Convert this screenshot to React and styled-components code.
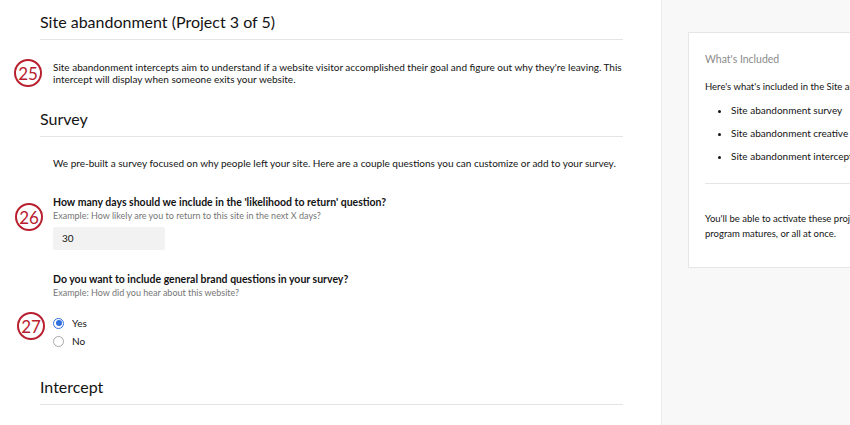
import React from 'react';
import styled, { createGlobalStyle } from 'styled-components';

const GlobalStyle = createGlobalStyle`
  html, body {
    margin: 0;
    padding: 0;
    background: #ffffff;
    font-family: Lato, "Open Sans", "Liberation Sans", sans-serif;
    color: #1a1a1a;
  }
`;

const Page = styled.div`
  display: flex;
  width: 850px;
  height: 425px;
  overflow: hidden;
`;

const Main = styled.main`
  position: relative;
  width: 661px;
  flex-shrink: 0;
  padding: 0 38px 0 40px;
  box-sizing: border-box;
`;

const Aside = styled.aside`
  flex: 1;
  background: #f8f8f8;
  border-left: 1px solid #ebebeb;
  padding: 32px 0 0 26px;
  overflow: hidden;
`;

const SectionTitle = styled.h2`
  margin: 0;
  font-size: 16px;
  font-weight: 400;
  line-height: 22px;
  color: #141414;
  padding: ${(p) => p.$top || 11}px 0 6px;
  border-bottom: 1px solid #e4e4e4;
`;

const Body = styled.div`
  padding: ${(p) => p.$top || 0}px 0 0 13px;
`;

const Paragraph = styled.p`
  margin: 0;
  font-size: 10px;
  line-height: 11.5px;
  color: #141414;
`;

const Question = styled.div`
  margin-top: ${(p) => p.$top}px;
`;

const Prompt = styled.div`
  font-size: 10.5px;
  font-weight: 700;
  line-height: 13px;
  color: #141414;
`;

const Hint = styled.div`
  font-size: 9px;
  line-height: 13px;
  color: #767676;
`;

const NumberInput = styled.div`
  margin-top: 5px;
  width: 112px;
  height: 23px;
  background: #f2f2f2;
  border-radius: 2px;
  box-sizing: border-box;
  padding-left: 9px;
  display: flex;
  align-items: center;
  font-size: 10px;
  color: #141414;
`;

const RadioGroup = styled.div`
  margin-top: 19px;
  display: flex;
  flex-direction: column;
  gap: 7px;
`;

const RadioRow = styled.label`
  display: flex;
  align-items: center;
  gap: 8px;
  height: 11px;
  font-size: 10px;
  color: #141414;
`;

const RadioDot = styled.span`
  width: 11px;
  height: 11px;
  border-radius: 50%;
  box-sizing: border-box;
  border: 1px solid ${(p) => (p.$checked ? '#2f6fde' : '#a6a6a6')};
  background: #fff;
  display: flex;
  align-items: center;
  justify-content: center;

  &::after {
    content: '';
    width: 6px;
    height: 6px;
    border-radius: 50%;
    background: ${(p) => (p.$checked ? '#2f6fde' : 'transparent')};
  }
`;

const Step = styled.div`
  position: absolute;
  left: ${(p) => p.$x - 14}px;
  top: ${(p) => p.$y - 14}px;
  width: 28px;
  height: 28px;
  box-sizing: border-box;
  border: 2.5px solid #b8202f;
  border-radius: 50%;
  background: #fff;
  color: #b8202f;
  font-size: 17px;
  line-height: 1;
  display: flex;
  align-items: center;
  justify-content: center;
  padding-top: 1px;
`;

const Card = styled.div`
  width: 200px;
  height: 236px;
  background: #fff;
  border: 1px solid #e6e6e6;
  padding: 19px 0 0 16px;
  box-sizing: border-box;
  white-space: nowrap;
  overflow: hidden;
`;

const CardTitle = styled.div`
  font-size: 10.5px;
  line-height: 14px;
  color: #8a8a8a;
`;

const CardText = styled.div`
  font-size: 9.5px;
  line-height: 15px;
  color: #141414;
  margin-top: ${(p) => p.$top || 0}px;
`;

const Bullets = styled.ul`
  margin: 9px 0 0;
  padding: 0 0 0 26px;
  font-size: 10px;
  line-height: 15px;
  color: #141414;

  li {
    margin-bottom: 8px;
  }
`;

const CardRule = styled.hr`
  margin: 19px 0 0;
  border: none;
  border-top: 1px solid #e6e6e6;
`;

export default function App() {
  return (
    <Page>
      <GlobalStyle />
      <Main>
        <SectionTitle $top={11}>Site abandonment (Project 3 of 5)</SectionTitle>
        <Body $top={22}>
          <Paragraph>
            Site abandonment intercepts aim to understand if a website visitor accomplished their goal and figure out why they're leaving. This intercept will display when someone exits your website.
          </Paragraph>
        </Body>

        <SectionTitle $top={23}>Survey</SectionTitle>
        <Body $top={21}>
          <Paragraph>
            We pre-built a survey focused on why people left your site. Here are a couple questions you can customize or add to your survey.
          </Paragraph>

          <Question $top={26}>
            <Prompt>How many days should we include in the 'likelihood to return' question?</Prompt>
            <Hint>Example: How likely are you to return to this site in the next X days?</Hint>
            <NumberInput>30</NumberInput>
          </Question>

          <Question $top={23}>
            <Prompt>Do you want to include general brand questions in your survey?</Prompt>
            <Hint>Example: How did you hear about this website?</Hint>
            <RadioGroup>
              <RadioRow>
                <RadioDot $checked />
                Yes
              </RadioRow>
              <RadioRow>
                <RadioDot />
                No
              </RadioRow>
            </RadioGroup>
          </Question>
        </Body>

        <SectionTitle $top={29}>Intercept</SectionTitle>

        <Step $x={28} $y={73}>25</Step>
        <Step $x={29} $y={217}>26</Step>
        <Step $x={31} $y={326}>27</Step>
      </Main>

      <Aside>
        <Card>
          <CardTitle>What's Included</CardTitle>
          <CardText $top={13}>Here's what's included in the Site abandonment program:</CardText>
          <Bullets>
            <li>Site abandonment survey</li>
            <li>Site abandonment creative</li>
            <li>Site abandonment intercept</li>
          </Bullets>
          <CardRule />
          <CardText $top={27}>You'll be able to activate these projects one at a time as your</CardText>
          <CardText>program matures, or all at once.</CardText>
        </Card>
      </Aside>
    </Page>
  );
}
